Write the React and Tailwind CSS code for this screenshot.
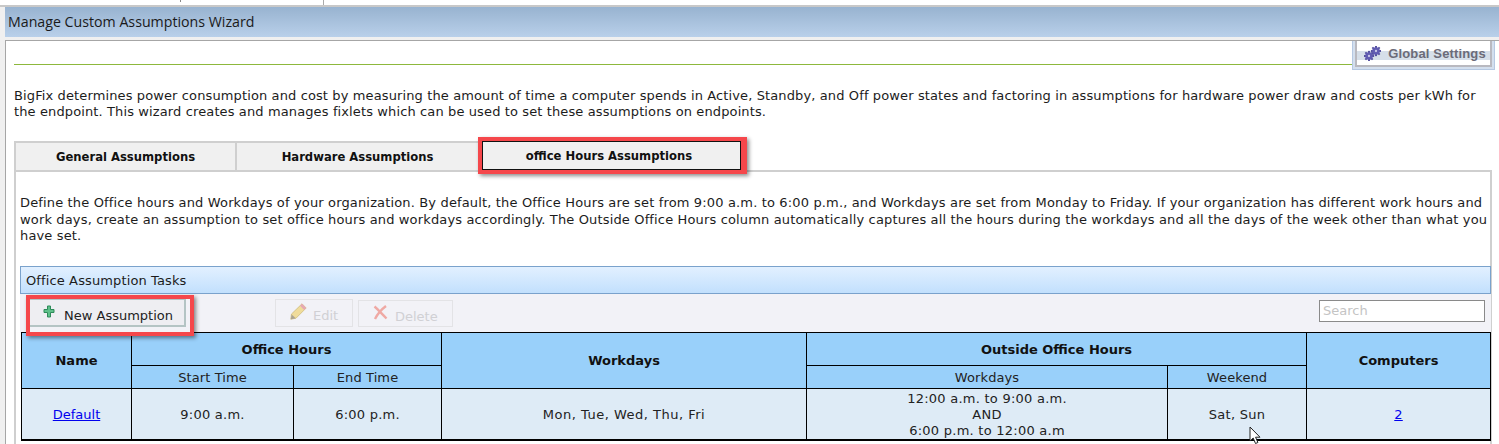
const FONT = "font-['DejaVu_Sans',Verdana,sans-serif]";

function GearsIcon() {
  const teeth = [0, 45, 90, 135];
  const gear = (cx, cy, r) => (
    <g>
      {teeth.map((a) => (
        <rect
          key={a}
          x={cx - r * 0.25}
          y={cy - r * 1.35}
          width={r * 0.5}
          height={r * 2.7}
          fill="#4f4a9c"
          transform={`rotate(${a} ${cx} ${cy})`}
        />
      ))}
      <circle cx={cx} cy={cy} r={r} fill="#615cb2" />
      <circle cx={cx} cy={cy} r={r * 0.3} fill="#c9c9e8" />
    </g>
  );
  return (
    <svg width="17" height="15" viewBox="0 0 17 15">
      {gear(12, 5, 3.8)}
      {gear(5, 10, 3.8)}
    </svg>
  );
}

function PlusIcon() {
  return (
    <svg width="12" height="13" viewBox="0 0 12 13">
      <path d="M4.5 1h3v3.5H11v3H7.5V12h-3V7.5H1v-3h3.5z" fill="#5fc08a" stroke="#2e8b5a" strokeWidth="1" />
    </svg>
  );
}

function PencilIcon() {
  return (
    <svg width="17" height="17" viewBox="0 0 17 17">
      <path d="M1.5 11 12 .8l4.2 4.2L6 15.2 .8 16.2z" fill="#f0dc9a" stroke="#cdbb7e" strokeWidth="0.8" />
      <path d="M12 .8l4.2 4.2-2 2L10 2.8z" fill="#e6a9b4" />
      <path d="M.8 16.2l.9-4.8 3.9 3.9z" fill="#a9a294" />
    </svg>
  );
}

function CrossIcon() {
  return (
    <svg width="15" height="15" viewBox="0 0 15 15">
      <path d="M1.5 1.5c3 2.5 5 5 12 12M13 1C9 4 5 8 2 14" fill="none" stroke="#efa9a4" strokeWidth="2.4" />
    </svg>
  );
}

function Cursor() {
  return (
    <svg className="absolute left-[1249px] top-[426px]" width="13" height="18" viewBox="0 0 13 18">
      <path d="M1 1v14l3.2-3 2.3 5.5 2.4-1-2.3-5.3H11z" fill="#fff" stroke="#222" strokeWidth="1" />
    </svg>
  );
}

const TH = "border border-black bg-[#99d0fa] font-bold text-[13px] text-[#111] text-center px-0 pb-0 pt-[2px]";
const SUB = "border border-black bg-[#99d0fa] font-normal text-[13px] tracking-[0.1px] text-[#222] text-center px-0 pb-0 pt-[2px]";
const TD = "border border-black bg-[#deebf6] text-[13px] tracking-[0.25px] text-[#222] text-center px-0 pb-0 pt-[2px]";

export default function App() {
  return (
    <div className={`${FONT} relative flex h-[444px] w-[1499px] flex-col overflow-hidden bg-[#f0f0f0] text-[#222]`}>
      {/* window strip above the title */}
      <div className="flex h-[7px] shrink-0 border-b-2 border-[#c8c8c8] bg-white">
        <div className="h-[2px] w-[181px] border-r border-[#888]" />
        <div className="h-[5px] w-[143px] border-r border-[#aaa]" />
      </div>

      <div className="ml-[5px] flex h-[30px] shrink-0 items-center bg-gradient-to-b from-[#98b3d0] to-[#b9d0ea] pl-[3px] font-['Open_Sans',sans-serif] text-[14.2px] text-[#1a1a1a]">
        Manage Custom Assumptions Wizard
      </div>

      <div className="ml-[5px] mt-[3px] h-[404px] shrink-0 overflow-hidden border-l border-t border-[#a6a6a6] bg-white">
        {/* settings row */}
        <div className="flex h-[29px] items-end pl-[8px]">
          <div className="mb-[5px] flex-1 border-b border-[#8db83c]" />
          <button className="mr-[4px] h-[29px] w-[143px] border border-t-0 border-[#b5c8e2] bg-[#d3dfee] px-[2px] pb-[2px]">
            <div className="flex h-full items-center justify-center border-2 border-t-0 border-[#b9b9c0] bg-[linear-gradient(to_bottom,#fff_0,#fff_40%,#d6dfe9_40%,#d6dfe9_80%,#fff_80%)] pl-[3px]">
              <GearsIcon />
              <span className="ml-[7px] mt-px font-['Liberation_Sans',sans-serif] text-[13px] font-bold tracking-[0.15px] text-[#6b6b78]">Global Settings</span>
            </div>
          </button>
        </div>

        <p className="ml-[8px] mt-[18px] h-[32px] w-[1475px] text-[13px] leading-[16px] tracking-[0.12px] text-[#1c1c1c]">
          BigFix determines power consumption and cost by measuring the amount of time a computer spends in Active, Standby, and Off power states and factoring in assumptions for hardware power draw and costs per kWh for the endpoint. This wizard creates and manages fixlets which can be used to set these assumptions on endpoints.
        </p>

        {/* tabs */}
        <div className="ml-[8px] mt-[21px] flex h-[29px] items-stretch text-[11.6px] font-bold text-[#111]">
          <div className="flex w-[221px] items-center justify-center border-2 border-b-0 border-r-0 border-[#cfcfcf] bg-[#f0f0f0] pt-[3px]">General Assumptions</div>
          <div className="flex w-[243px] items-center justify-center border-2 border-b-0 border-r-0 border-[#cfcfcf] bg-[#f0f0f0] pt-[3px]">Hardware Assumptions</div>
          <div className="-mt-[4px] flex h-[37px] w-[269px] border-4 border-r-[6px] border-[#f5474b] shadow-[2px_2px_4px_rgba(0,0,0,0.45)]">
            <div className="flex flex-1 items-center justify-center border border-[#111] bg-[#f0f0f0] pr-[5px] pt-[3px]">office Hours Assumptions</div>
          </div>
        </div>

        {/* tab body */}
        <div className="ml-[8px] h-[300px] w-[1478px] border-x-2 border-t-2 border-[#cfcfcf] pl-[4px]">
          <p className="mt-[23px] w-[1472px] text-[13px] leading-[16.5px] tracking-[0.15px] text-[#1c1c1c]">
            Define the Office hours and Workdays of your organization. By default, the Office Hours are set from 9:00 a.m. to 6:00 p.m., and Workdays are set from Monday to Friday. If your organization has different work hours and work days, create an assumption to set office hours and workdays accordingly. The Outside Office Hours column automatically captures all the hours during the workdays and all the days of the week other than what you have set.
          </p>

          <div className="mt-[21px] w-[1471px]">
            <div className="flex h-[28px] items-center border border-[#7aa2cc] bg-gradient-to-b from-[#e2f0ff] to-[#c2e0fd] pl-[5px] pt-[2px] text-[13px] tracking-[0.12px] text-[#1c1c1c]">
              Office Assumption Tasks
            </div>

            <div className="flex h-[39px] bg-[#f2f2f7] pl-[6px]">
              <div className="relative z-10 mt-[1px] h-[41px] w-[168px] border-4 border-[#f5474b] shadow-[2px_2px_4px_rgba(0,0,0,0.45)]">
                <div className="flex h-[28px] w-[156px] items-center border-b-2 border-r-2 border-t border-[#b4c4c4] bg-[#eeeef2] pl-[13px] pt-[7px] text-[13px] text-[#222]">
                  <span className="-mt-[9px]"><PlusIcon /></span>
                  <span className="ml-[9px]">New Assumption</span>
                </div>
              </div>
              <div className="ml-[81px] mt-[5px] flex h-[28px] w-[78px] items-center border border-[#e3e3e6] pl-[14px] pt-[7px] text-[13px] text-[#d0d0d4]">
                <span className="-mt-[9px]"><PencilIcon /></span>
                <span className="ml-[6px]">Edit</span>
              </div>
              <div className="ml-[5px] mt-[6px] flex h-[27px] w-[95px] items-center border border-[#e3e3e6] pl-[14px] pt-[7px] text-[13px] text-[#d0d0d4]">
                <span className="-mt-[8px]"><CrossIcon /></span>
                <span className="ml-[7px]">Delete</span>
              </div>
              <input
                placeholder="Search"
                className="ml-[866px] mt-[6px] h-[22px] w-[166px] border border-[#8a8a8a] bg-white px-[3px] text-[13px] outline-none placeholder:text-[#c4c4c4]"
              />
            </div>

            <table className="-mt-px ml-px w-[1469px] table-fixed border-collapse">
              <colgroup>
                <col className="w-[110px]" />
                <col className="w-[162px]" />
                <col className="w-[148px]" />
                <col className="w-[365px]" />
                <col className="w-[361px]" />
                <col className="w-[139px]" />
                <col className="w-[184px]" />
              </colgroup>
              <thead>
                <tr className="h-[33px]">
                  <th rowSpan={2} className={TH}>Name</th>
                  <th colSpan={2} className={TH}>Office Hours</th>
                  <th rowSpan={2} className={TH}>Workdays</th>
                  <th colSpan={2} className={TH}>Outside Office Hours</th>
                  <th rowSpan={2} className={TH}>Computers</th>
                </tr>
                <tr className="h-[23px]">
                  <th className={SUB}>Start Time</th>
                  <th className={SUB}>End Time</th>
                  <th className={SUB}>Workdays</th>
                  <th className={SUB}>Weekend</th>
                </tr>
              </thead>
              <tbody>
                <tr className="h-[52px] border-b-2 border-black">
                  <td className={TD}><a className="tracking-normal text-[#0000ee] underline">Default</a></td>
                  <td className={TD}>9:00 a.m.</td>
                  <td className={TD}>6:00 p.m.</td>
                  <td className={TD}><span className="tracking-[0.5px]">Mon, Tue, Wed, Thu, Fri</span></td>
                  <td className={`${TD} leading-[16px]`}>
                    12:00 a.m. to 9:00 a.m.<br />AND<br />6:00 p.m. to 12:00 a.m
                  </td>
                  <td className={TD}>Sat, Sun</td>
                  <td className={TD}><a className="text-[#0000ee] underline">2</a></td>
                </tr>
              </tbody>
            </table>
          </div>
        </div>
      </div>

      <Cursor />
    </div>
  );
}
